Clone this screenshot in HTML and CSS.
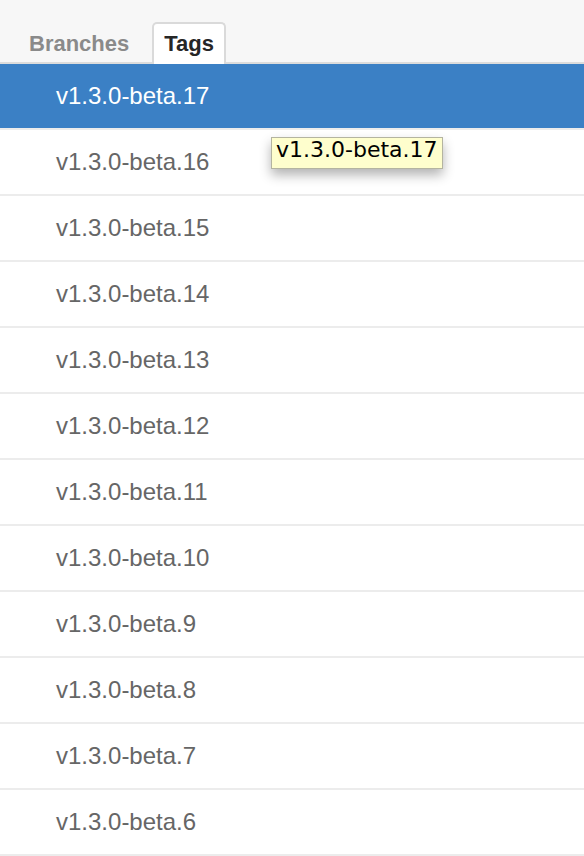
FILE: index.html
```
<!DOCTYPE html>
<html>
<head>
<meta charset="utf-8">
<link rel="stylesheet" href="styles.css">
</head>
<body>
<div class="panel">
  <div class="tabs">
    <span class="tab">Branches</span>
    <span class="tab active">Tags</span>
  </div>
  <ul class="list">
    <li class="item selected">v1.3.0-beta.17</li>
    <li class="item">v1.3.0-beta.16</li>
    <li class="item">v1.3.0-beta.15</li>
    <li class="item">v1.3.0-beta.14</li>
    <li class="item">v1.3.0-beta.13</li>
    <li class="item">v1.3.0-beta.12</li>
    <li class="item">v1.3.0-beta.11</li>
    <li class="item">v1.3.0-beta.10</li>
    <li class="item">v1.3.0-beta.9</li>
    <li class="item">v1.3.0-beta.8</li>
    <li class="item">v1.3.0-beta.7</li>
    <li class="item">v1.3.0-beta.6</li>
  </ul>
  <div class="tooltip">v1.3.0-beta.17</div>
</div>
</body>
</html>
```
FILE: styles.css
```
html, body {
  margin: 0;
  padding: 0;
  background: #ffffff;
  overflow: hidden;
}
.panel {
  position: relative;
  font-family: "Liberation Sans", Arial, sans-serif;
}
.tabs {
  display: flex;
  align-items: flex-end;
  gap: 11px;
  height: 62px;
  padding-left: 17px;
  background: #f7f7f7;
  border-bottom: 2px solid #dcdcdc;
}
.tab {
  display: block;
  padding: 0 10px;
  height: 40px;
  line-height: 40px;
  font-size: 22px;
  font-weight: bold;
  color: #8a8a8a;
  border: 2px solid transparent;
  border-bottom: none;
  margin-bottom: -2px;
  border-radius: 5px 5px 0 0;
}
.tab.active {
  color: #262626;
  background: #ffffff;
  border-color: #dadada;
}
.list {
  list-style: none;
  margin: 0;
  padding: 0;
}
.item {
  height: 64px;
  line-height: 64px;
  padding-left: 56px;
  font-size: 24px;
  color: #666666;
  border-bottom: 2px solid #ececec;
}
.item.selected {
  background: #3b80c5;
  color: #ffffff;
}
.tooltip {
  position: absolute;
  left: 271px;
  top: 137px;
  width: 172px;
  height: 32px;
  box-sizing: border-box;
  padding: 0 0 6px 4px;
  line-height: 24px;
  font-family: "DejaVu Sans", Verdana, sans-serif;
  font-size: 22px;
  color: #000000;
  background: #fefecd;
  border: 1px solid #b4b4a0;
  box-shadow: 0 6px 12px rgba(0, 0, 0, 0.3);
  white-space: nowrap;
}
```
